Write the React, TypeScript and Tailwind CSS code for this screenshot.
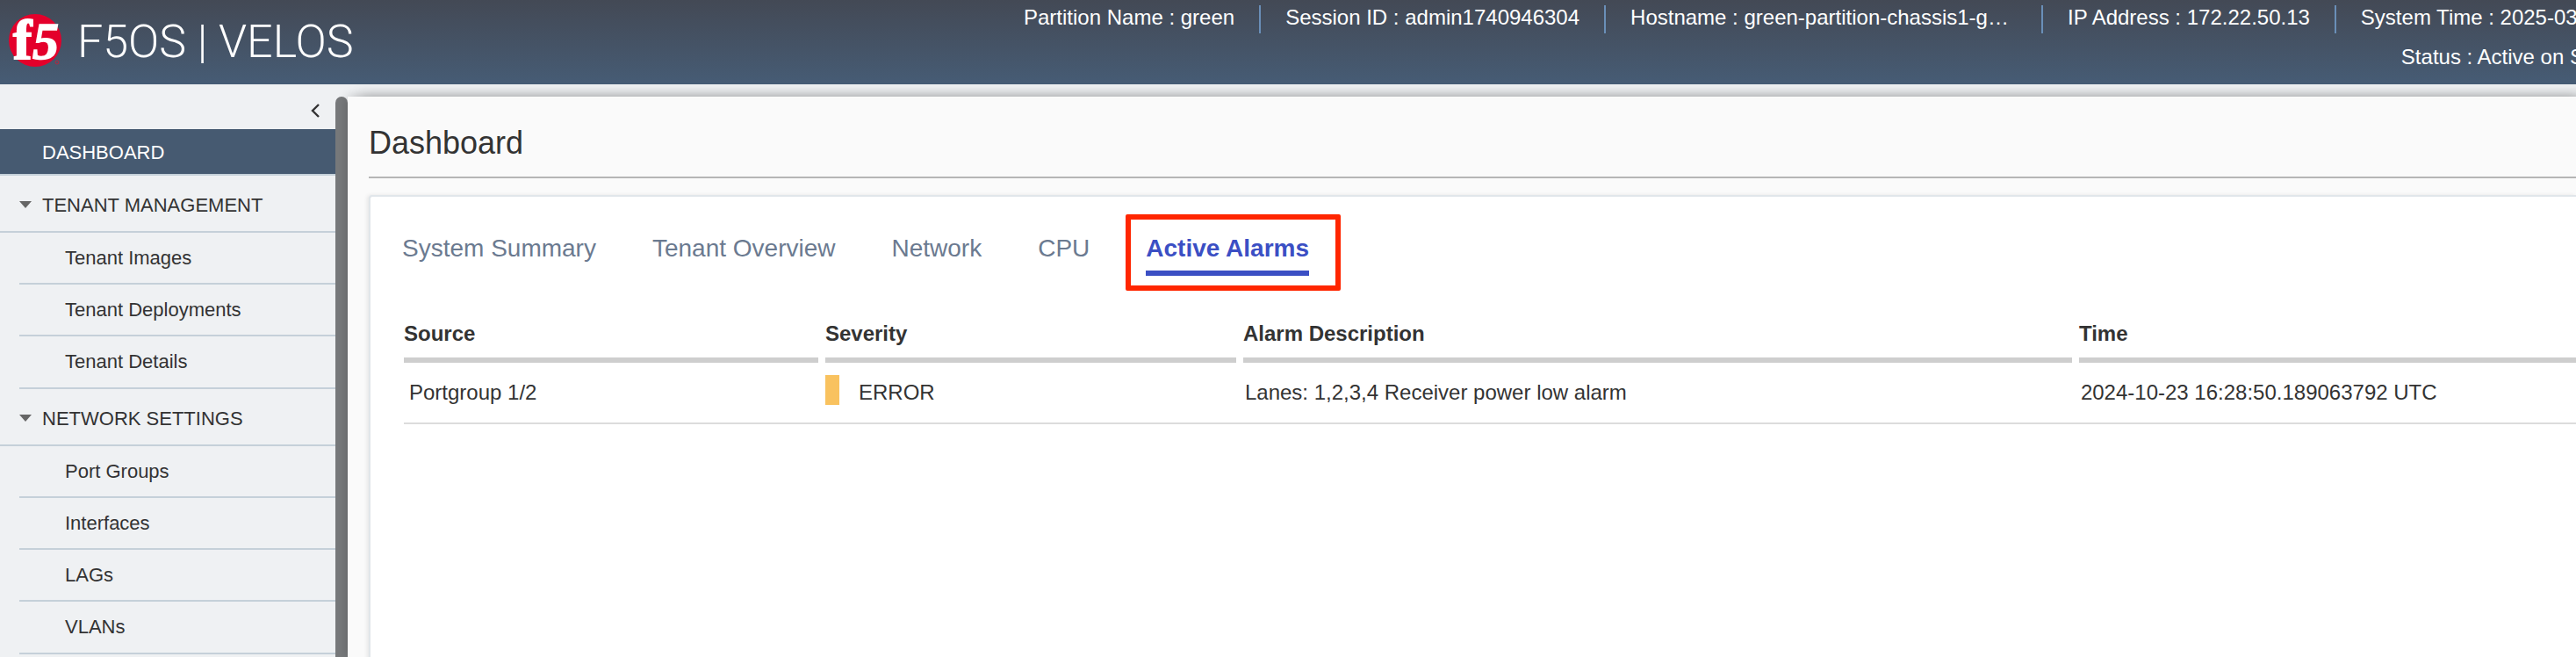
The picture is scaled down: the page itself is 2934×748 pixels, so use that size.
const FONT = "font-['Liberation_Sans',Arial,sans-serif]";

const sessionItems = [
  { label: "Partition Name", value: "green", width: "" },
  { label: "Session ID", value: "admin1740946304", width: "" },
  { label: "Hostname", value: "green-partition-chassis1-g…", width: "w-[498px]" },
  { label: "IP Address", value: "172.22.50.13", width: "" },
];

const sections = [
  { title: "TENANT MANAGEMENT", items: ["Tenant Images", "Tenant Deployments", "Tenant Details"] },
  { title: "NETWORK SETTINGS", items: ["Port Groups", "Interfaces", "LAGs", "VLANs"] },
];

const tabs = ["System Summary", "Tenant Overview", "Network", "CPU"];

const columns = [
  { name: "Source", width: "w-[19.4%]" },
  { name: "Severity", width: "w-[19.24%]" },
  { name: "Alarm Description", width: "w-[38.48%]" },
  { name: "Time", width: "" },
];

function F5Logo() {
  return (
    <svg viewBox="0 0 60 60" className="size-[60px] shrink-0 overflow-visible" role="img" aria-label="F5">
      <circle cx="30" cy="30" r="30" fill="#e4002b" />
      <g fill="#fff" stroke="#fff" fontFamily="'Liberation Serif', serif" fontWeight="700">
        <text x="5" y="51" fontSize="64" strokeWidth="2">
          f
        </text>
        <text x="27" y="51" fontSize="60" strokeWidth="1.5" fontStyle="italic">
          5
        </text>
      </g>
      <circle cx="55" cy="55" r="2" fill="none" stroke="#b8263f" strokeWidth="1" />
    </svg>
  );
}

function Header() {
  return (
    <header className="flex h-24 overflow-hidden bg-linear-to-b from-[#434955] to-[#465c75] text-2xl leading-8 text-white">
      <a href="#home" className="flex w-[1138px] shrink-0 items-start gap-[18px] pt-4 pl-[10px]">
        <F5Logo />
        <span className="font-['Roboto',sans-serif] text-[52px] leading-[64px] font-light">F5OS | VELOS</span>
      </a>
      <div className="shrink-0 pt-[6px] whitespace-nowrap">
        <ul className="flex leading-7">
          {sessionItems.map((item) => (
            <li key={item.label} className={`h-8 border-r-2 border-[#6a8fb8] px-7 ${item.width}`}>
              {item.label} : {item.value}
            </li>
          ))}
          <li className="pl-7">
            <div>System Time : 2025-03</div>
            <div className="mt-[17px] pl-[46px]">Status : Active on S</div>
          </li>
        </ul>
      </div>
    </header>
  );
}

function Sidebar() {
  return (
    <aside className="w-[382px] shrink-0 text-[22px] text-[#333]">
      <div className="flex h-[51px] items-center justify-end pt-2 pr-[7px]">
        <button type="button" aria-label="Collapse menu" className="flex size-8 items-center justify-center">
          <svg viewBox="0 0 12 18" className="h-[18px] w-3" fill="none" stroke="#333" strokeWidth="2.4">
            <path d="M10 2 3 9l7 7" />
          </svg>
        </button>
      </div>
      <nav>
        <a
          href="#dashboard"
          className="flex h-[53px] items-center border-b-2 border-[#c5d0d9] bg-[#465a71] pt-px pl-12 text-white"
        >
          DASHBOARD
        </a>
        {sections.map((section) => (
          <div key={section.title}>
            <button
              type="button"
              className="flex h-[65px] w-full items-center gap-3 border-b-2 border-[#c5d0d9] pt-[3px] pl-[22px]"
            >
              <svg viewBox="0 0 14 8" className="h-2 w-[14px]" fill="#666">
                <path d="M0 0h14L7 8z" />
              </svg>
              {section.title}
            </button>
            <ul className="pl-[22px]">
              {section.items.map((item) => (
                <li key={item} className="border-b-2 border-[#c5d0d9] last:pb-px">
                  <a href="#item" className="flex h-[57px] items-center pl-[52px]">
                    {item}
                  </a>
                </li>
              ))}
            </ul>
          </div>
        ))}
      </nav>
    </aside>
  );
}

function AlarmsTable() {
  return (
    <table className="w-full table-fixed border-collapse text-left text-2xl leading-8">
      <thead>
        <tr>
          {columns.map((column) => (
            <th key={column.name} className={`p-0 pr-2 last:pr-0 ${column.width}`}>
              <div className="border-b-[6px] border-[#cecece] pb-[11px]">{column.name}</div>
            </th>
          ))}
        </tr>
      </thead>
      <tbody>
        <tr className="h-[69px] border-b-2 border-[#dcdcdc]">
          <td className="p-0 pl-[6px]">Portgroup 1/2</td>
          <td className="p-0">
            <div className="flex h-8 items-center gap-[22px]">
              <span className="mb-[6px] h-[34px] w-4 shrink-0 bg-[#f9c25f]" />
              ERROR
            </div>
          </td>
          <td className="p-0 pl-[2px]">Lanes: 1,2,3,4 Receiver power low alarm</td>
          <td className="p-0 pl-[2px]">2024-10-23 16:28:50.189063792 UTC</td>
        </tr>
      </tbody>
    </table>
  );
}

export default function App() {
  return (
    <div className={`flex h-screen flex-col overflow-hidden bg-[#eff1f3] text-[#333] ${FONT}`}>
      <Header />
      <div className="flex min-h-0 flex-1 overflow-hidden">
        <Sidebar />
        <div className="mt-[14px] w-[14px] shrink-0 rounded-t-[7px] bg-[#77797b]" />
        <main className="mt-[14px] min-w-0 flex-1 bg-[#fafafa] pt-[30px] pl-6 shadow-[14px_0_14px_rgba(0,0,0,0.25),0_0_12px_rgba(0,0,0,0.2)]">
          <h1 className="border-b-2 border-[#b5b5b5] pb-[15px] text-4xl leading-[46px]">Dashboard</h1>
          <section className="mt-[19px] h-full rounded-tl border-t-2 border-l-2 border-[#e1e6ea] bg-white pt-5 pl-9 shadow-[-2px_0_4px_rgba(0,0,0,0.08)]">
            <div role="tablist" className="flex items-center text-[28px] leading-8 text-[#6b7a90]">
              {tabs.map((tab) => (
                <button key={tab} type="button" role="tab" aria-selected="false" className="pr-16 pb-[10px]">
                  {tab}
                </button>
              ))}
              <div className="-ml-[23px] rounded-xs border-[6px] border-[#ff2600] pt-[17px] pr-[30px] pb-[11px] pl-[17px]">
                <button
                  type="button"
                  role="tab"
                  aria-selected="true"
                  className="border-b-[6px] border-[#3b4fc4] pb-[9px] font-bold text-[#3b4fc4]"
                >
                  Active Alarms
                </button>
              </div>
            </div>
            <div className="mt-[33px] pl-[2px]">
              <AlarmsTable />
            </div>
          </section>
        </main>
      </div>
    </div>
  );
}
